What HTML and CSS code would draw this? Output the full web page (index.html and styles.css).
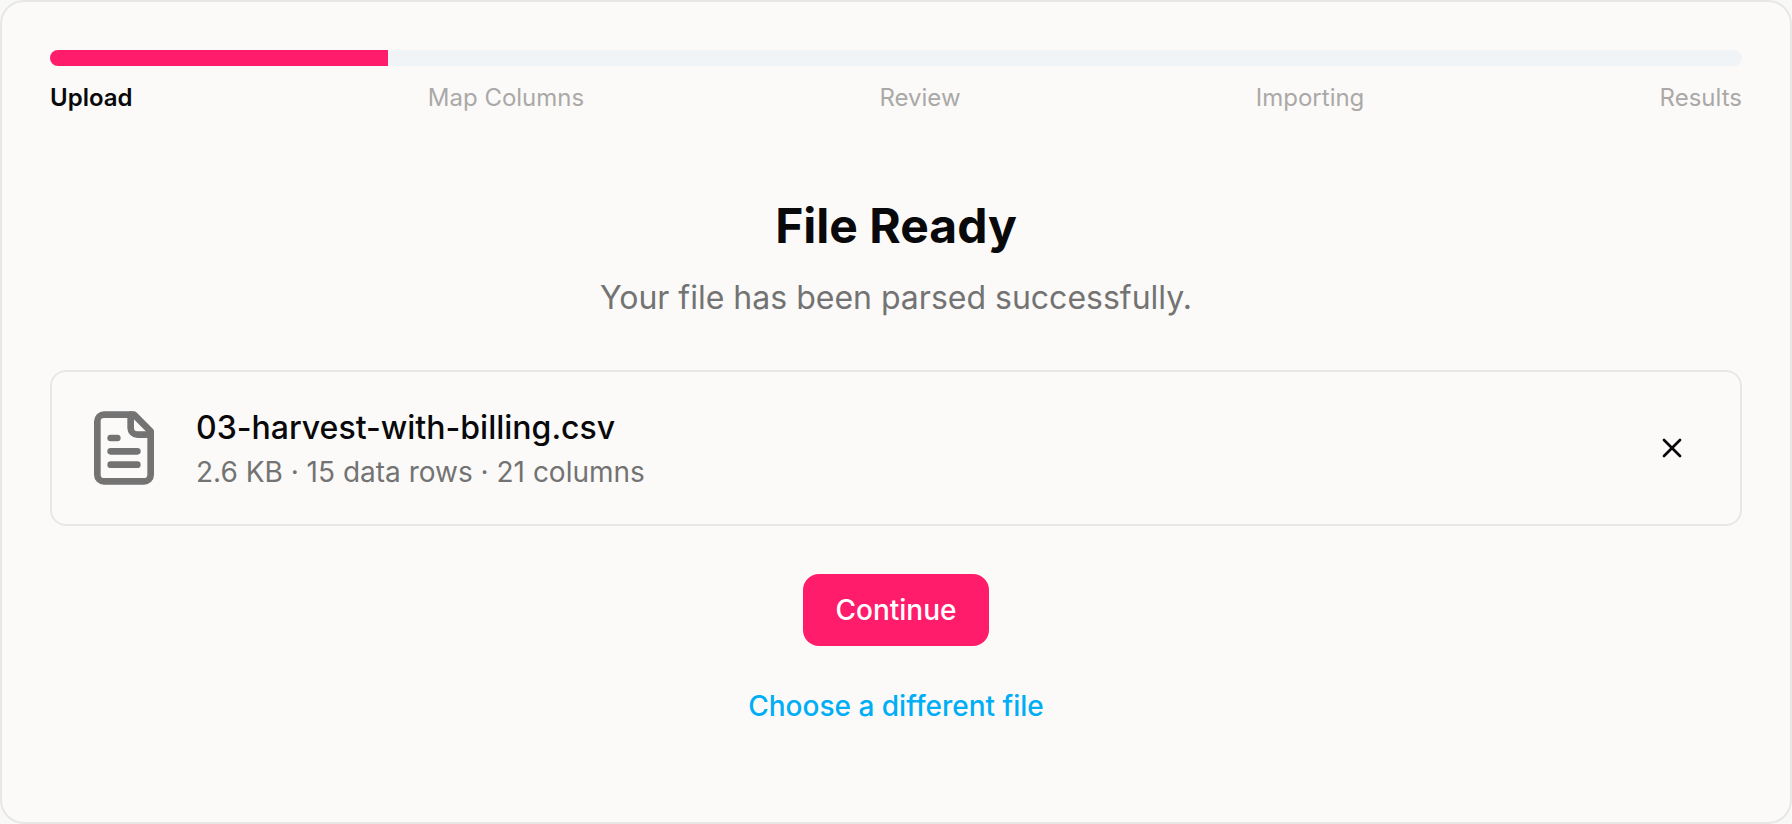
FILE: index.html
```html
<!DOCTYPE html>
<html lang="en">
<head>
    <meta charset="UTF-8">
    <meta name="viewport" content="width=device-width, initial-scale=1.0">
    <title>Import Data</title>
    <link rel="stylesheet" href="styles.css">
</head>
<body>
    <main class="card">
        <!-- Progress -->
        <div class="progress" role="progressbar" aria-label="Import progress" aria-valuenow="20" aria-valuemin="0" aria-valuemax="100">
            <div class="progress-fill" style="width: 20%"></div>
        </div>
        <ol class="steps">
            <li class="active" aria-current="step">Upload</li>
            <li>Map Columns</li>
            <li>Review</li>
            <li>Importing</li>
            <li>Results</li>
        </ol>

        <!-- Upload step -->
        <section class="content">
            <h1>File Ready</h1>
            <p class="subtitle">Your file has been parsed successfully.</p>

            <div class="file">
                <svg class="file-icon" viewBox="0 0 24 24" aria-hidden="true">
                    <path d="M15 2H6a2 2 0 0 0-2 2v16a2 2 0 0 0 2 2h12a2 2 0 0 0 2-2V7Z"/>
                    <path d="M14 2v4a2 2 0 0 0 2 2h4"/>
                    <path d="M10 9H8"/>
                    <path d="M16 13H8"/>
                    <path d="M16 17H8"/>
                </svg>
                <div class="file-info">
                    <p class="file-name">03-harvest-with-billing.csv</p>
                    <p class="file-meta">2.6 KB · 15 data rows · 21 columns</p>
                </div>
                <button type="button" class="remove" aria-label="Remove file">
                    <svg viewBox="0 0 24 24" aria-hidden="true">
                        <path d="M18 6 6 18"/>
                        <path d="m6 6 12 12"/>
                    </svg>
                </button>
            </div>

            <div class="actions">
                <button type="button" class="btn primary">Continue</button>
                <button type="button" class="btn link">Choose a different file</button>
            </div>
        </section>
    </main>
</body>
</html>
```

FILE: styles.css
```css
* {
    box-sizing: border-box;
    margin: 0;
    padding: 0;
}
body {
    font-family: Inter, sans-serif;
    color: #09090b;
    background-color: #f8f8f7;
}
.card {
    min-height: 100vh;
    padding: 48px;
    border: 2px solid #e8e7e5;
    border-radius: 24px;
    background-color: #fbfaf8;
}
.progress {
    height: 16px;
    border-radius: 8px;
    background-color: #f0f4f7;
    overflow: hidden;
}
.progress-fill {
    height: 100%;
    background-color: #ff1d6b;
}
.steps {
    display: flex;
    justify-content: space-between;
    margin-top: 16px;
    list-style: none;
    font-size: 24px;
    line-height: 32px;
    color: #aaa9a8;
}
.steps .active {
    font-weight: 600;
    color: #09090b;
}
.content {
    margin-top: 48px;
    padding: 32px 0;
}
h1 {
    font-size: 48px;
    line-height: 64px;
    font-weight: 700;
    text-align: center;
}
.subtitle {
    margin-top: 16px;
    font-size: 32px;
    line-height: 48px;
    text-align: center;
    color: #737373;
}
.file {
    display: flex;
    align-items: center;
    gap: 32px;
    margin-top: 48px;
    padding: 32px;
    border: 2px solid #e8e7e5;
    border-radius: 16px;
}
svg {
    fill: none;
    stroke: currentColor;
    stroke-width: 2;
    stroke-linecap: round;
    stroke-linejoin: round;
}
.file-icon {
    width: 80px;
    height: 80px;
    flex-shrink: 0;
    color: #737373;
}
.file-info {
    flex: 1;
    min-width: 0;
}
.file-name {
    font-size: 32px;
    line-height: 48px;
    font-weight: 500;
}
.file-meta {
    font-size: 28px;
    line-height: 40px;
    color: #737373;
}
button {
    border: none;
    background: none;
    font-family: inherit;
    color: inherit;
    cursor: pointer;
}
.remove {
    display: flex;
    align-items: center;
    justify-content: center;
    width: 72px;
    height: 72px;
}
.remove svg {
    width: 32px;
    height: 32px;
}
.actions {
    display: flex;
    flex-direction: column;
    align-items: center;
    gap: 24px;
    margin-top: 48px;
}
.btn {
    padding: 16px 32px;
    border-radius: 16px;
    font-size: 28px;
    line-height: 40px;
    font-weight: 500;
}
.primary {
    background-color: #ff1d6b;
    color: #fff;
}
.primary:hover {
    background-color: #e6195f;
}
.link {
    color: #00aef5;
}
.link:hover {
    text-decoration: underline;
}
```
